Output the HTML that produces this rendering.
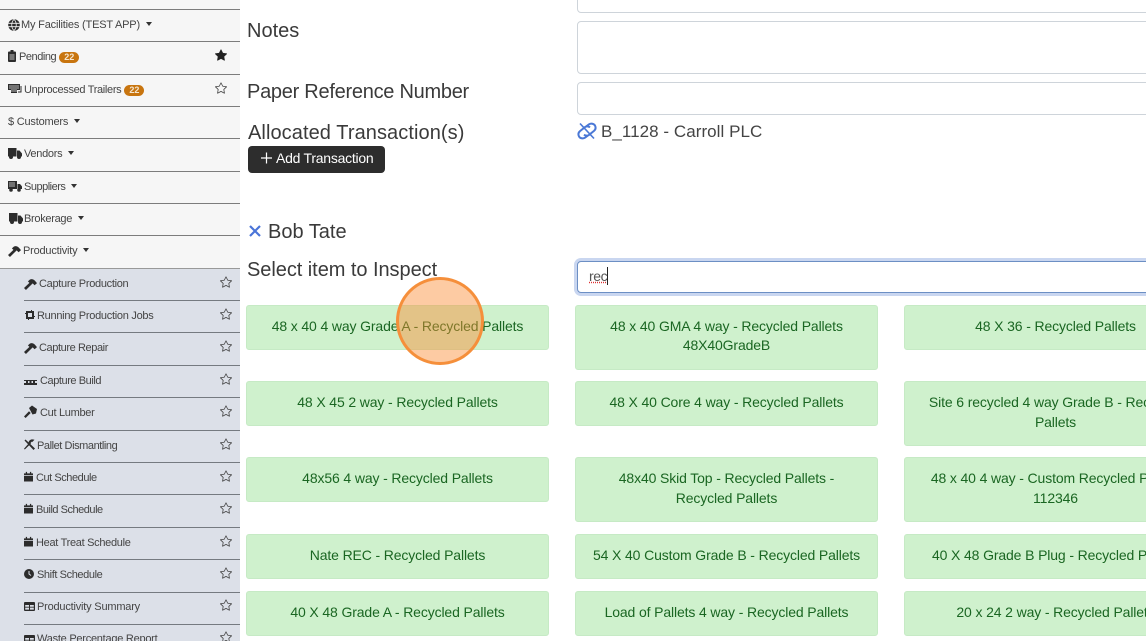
<!DOCTYPE html>
<html lang="en"><head><meta charset="utf-8"><title>Inspection</title>
<style>
html,body{margin:0;padding:0;width:1146px;height:641px;overflow:hidden;background:#fff}
body{position:relative;font-family:"Liberation Sans",sans-serif;color:#333}
#side{position:absolute;left:0;top:0;width:240px;height:641px;background:#f6f6f6;overflow:hidden}
#sub{position:absolute;left:0;top:268px;width:240px;height:373px;background:#dce0e8}
.l{position:absolute;left:0;width:240px;height:1px;background:#7c7c7c}
.s{left:24px;width:216px;background:#757a80}
.t{position:absolute;font-size:11px;line-height:16px;margin-top:1px;white-space:nowrap;color:#444;letter-spacing:-.2px}
.ic{position:absolute;fill:#2c2c2c}
.st{position:absolute;width:12px;height:12px;fill:#444}
.car{display:inline-block;width:0;height:0;border:3px solid transparent;border-top:4px solid #333;border-bottom:0;margin-left:6px;vertical-align:2px}
.b{display:inline-block;background:#c8750f;color:#f5e6cf;font-size:9px;font-weight:bold;line-height:11px;padding:0 5px;border-radius:6px;margin-left:3px;vertical-align:0;letter-spacing:0}
.lab{position:absolute;left:247px;font-size:20px;line-height:24px;white-space:nowrap;color:#3a3a3a;margin-top:1px}
.inp{position:absolute;left:577px;width:640px;border:1px solid #ced4da;border-radius:4px;background:#fff;box-sizing:border-box}
.card{position:absolute;width:303px;box-sizing:border-box;background:#cff1cd;border:1px solid #c6eac5;border-radius:3px;color:#1a6622;font-size:14px;line-height:20px;text-align:center;padding:10px 4px 0;white-space:nowrap;letter-spacing:-.13px}
.card span{display:block;margin-top:-1px}
#btn{position:absolute;left:248px;top:146px;width:137px;height:27px;background:#2d2d2d;border-radius:4px;color:#fff;font-size:14px;line-height:25px;box-sizing:border-box;padding-left:28px;letter-spacing:-.25px}
#dot{position:absolute;left:396px;top:277px;width:88px;height:88px;box-sizing:border-box;border:3.500px solid #f58f3b;border-radius:50%;background:rgba(250,140,50,.45)}
</style></head><body>
<svg width="0" height="0" style="position:absolute"><defs>
<symbol id="so" viewBox="0 0 16 16"><path d="M2.866 14.85c-.078.444.36.791.746.593l4.39-2.256 4.389 2.256c.386.198.824-.149.746-.592l-.83-4.73 3.522-3.356c.33-.314.16-.888-.282-.95l-4.898-.696L8.465.792a.513.513 0 0 0-.927 0L5.354 5.12l-4.898.696c-.441.062-.612.636-.283.95l3.523 3.356-.83 4.73zm4.905-2.767-3.686 1.894.694-3.957a.565.565 0 0 0-.163-.505L1.71 6.745l4.052-.576a.525.525 0 0 0 .393-.288L8 2.223l1.847 3.658a.525.525 0 0 0 .393.288l4.052.575-2.906 2.77a.565.565 0 0 0-.163.506l.694 3.957-3.686-1.894a.503.503 0 0 0-.461 0z"/></symbol>
<symbol id="sf" viewBox="0 0 16 16"><path d="M3.612 15.443c-.386.198-.824-.149-.746-.592l.83-4.73L.173 6.765c-.329-.314-.158-.888.283-.95l4.898-.696L7.538.792c.197-.39.73-.39.927 0l2.184 4.327 4.898.696c.441.062.612.636.282.95l-3.522 3.356.83 4.73c.078.443-.36.79-.746.592L8 13.187l-4.389 2.256z"/></symbol>
<symbol id="ham" viewBox="0 0 12 12"><path d="M0 10.200 5 5.400 3.600 4 5.400 2.400C7 1.600 8.600 2 10 3.400L12 5.600 9.800 7.600 8 5.900 1.800 12z"/></symbol>
<symbol id="truck" viewBox="0 0 14 11"><path d="M0 0h8.500v8.500H0zM9 2.500h2.500L14 5.500v3H9z"/><circle cx="3" cy="9" r="2"/><circle cx="11" cy="9" r="2"/></symbol>
<symbol id="cal" viewBox="0 0 10 11"><path d="M0 2h10v2H0zM0 4.800h10V11H0zM2 .3h1.400V3H2zM6.600.3H8V3H6.600z"/></symbol>
<symbol id="tbl" viewBox="0 0 11 9"><path fill-rule="evenodd" d="M1 0h9a1 1 0 0 1 1 1v7a1 1 0 0 1-1 1H1a1 1 0 0 1-1-1V1a1 1 0 0 1 1-1zm.2 3v1.800H5V3zm4.800 0v1.800h3.800V3zM1.200 5.600v2H5v-2zm4.800 0v2h3.800v-2z"/></symbol>
</defs></svg>

<div id="side">
<div id="sub"></div>
<div class="l" style="top:9px"></div><div class="l" style="top:41px"></div><div class="l" style="top:74px"></div><div class="l" style="top:106px"></div><div class="l" style="top:138px"></div><div class="l" style="top:171px"></div><div class="l" style="top:203px"></div><div class="l" style="top:235px"></div>
<div class="l" style="top:268px;background:#999"></div>
<div class="l s" style="top:300px"></div><div class="l s" style="top:332px"></div><div class="l s" style="top:365px"></div><div class="l s" style="top:397px"></div><div class="l s" style="top:430px"></div><div class="l s" style="top:462px"></div><div class="l s" style="top:494px"></div><div class="l s" style="top:527px"></div><div class="l s" style="top:559px"></div><div class="l s" style="top:592px"></div><div class="l s" style="top:624px"></div>

<svg class="ic" style="left:8px;top:19px" width="12" height="12" viewBox="0 0 12 12"><circle cx="6" cy="6" r="5.800"/><path d="M.4 4.300h11.200M.4 7.700h11.200M6 .4c-3 3-3 8.200 0 11.200M6 .4c3 3 3 8.200 0 11.200" stroke="#f6f6f6" stroke-width=".8" fill="none"/></svg>
<div class="t" style="left:21px;top:16px;letter-spacing:-.18px">My Facilities (TEST APP)<span class="car"></span></div>

<svg class="ic" style="left:8px;top:50px" width="8" height="12" viewBox="0 0 8 12"><path d="M2.500 0h3v1.500H7a1 1 0 0 1 1 1V11a1 1 0 0 1-1 1H1a1 1 0 0 1-1-1V2.500a1 1 0 0 1 1-1h1.500z"/><path d="M1.500 5h5M1.500 7h5M1.500 9h5" stroke="#f6f6f6" stroke-width=".8"/></svg>
<div class="t" style="left:19px;top:48px;letter-spacing:-.45px">Pending<span class="b">22</span></div>
<svg class="st" style="left:215px;top:49px;fill:#222"><use href="#sf"/></svg>

<svg class="ic" style="left:8px;top:84px" width="14" height="10" viewBox="0 0 14 10"><path d="M0 0h12v6H9V9H3V6H0z"/><path d="M2 1v4M4 1v7M6 1v7M8 1v7M10 1v4" stroke="#f6f6f6" stroke-width=".7"/><path d="M12.500 2H13.500V8.500H10V7.500H12.500z"/></svg>
<div class="t" style="left:24px;top:81px;letter-spacing:-.33px">Unprocessed Trailers<span class="b">22</span></div>
<svg class="st" style="left:215px;top:82px"><use href="#so"/></svg>

<div class="t" style="left:8px;top:113px">$ Customers<span class="car"></span></div>

<svg class="ic" style="left:8px;top:148px" width="14" height="11"><use href="#truck"/></svg>
<div class="t" style="left:24px;top:145px;letter-spacing:-.3px">Vendors<span class="car"></span></div>

<svg class="ic" style="left:8px;top:181px" width="14" height="11" viewBox="0 0 14 11"><path d="M0 0h9v8H0z"/><path d="M2 1v5M4 1v5M6 1v5" stroke="#f6f6f6" stroke-width=".7"/><path d="M9.500 3H12l2 2.400V8H9.500z"/><circle cx="3" cy="9" r="1.800"/><circle cx="11" cy="9" r="1.800"/></svg>
<div class="t" style="left:24px;top:178px;letter-spacing:-.5px">Suppliers<span class="car"></span></div>

<svg class="ic" style="left:9px;top:213px" width="14" height="11"><use href="#truck"/></svg>
<div class="t" style="left:24px;top:210px;letter-spacing:-.3px">Brokerage<span class="car"></span></div>

<svg class="ic" style="left:8px;top:244px" width="13" height="13"><use href="#ham"/></svg>
<div class="t" style="left:23px;top:242px">Productivity<span class="car"></span></div>

<svg class="ic" style="left:24px;top:277px" width="13" height="13"><use href="#ham"/></svg>
<div class="t" style="left:39px;top:275px;letter-spacing:-.3px">Capture Production</div>
<svg class="ic" style="left:25px;top:310px" width="10" height="10" viewBox="0 0 10 10"><path fill-rule="evenodd" d="M1 1h8v8H1zM3 3v4h4V3z"/><path d="M0 3h1v1H0zM9 6h1v1H9zM3 9h1v1H3zM6 0h1v1H6z"/></svg>
<div class="t" style="left:37px;top:307px;letter-spacing:-.28px">Running Production Jobs</div>
<svg class="ic" style="left:24px;top:341px" width="13" height="13"><use href="#ham"/></svg>
<div class="t" style="left:39px;top:339px;letter-spacing:-.4px">Capture Repair</div>
<svg class="ic" style="left:24px;top:380px" width="13" height="5" viewBox="0 0 13 5"><path d="M0 0h13v1H0zM0 3h13v2H0zM2 1h2v2H2zM5.500 1h2v2h-2zM9 1h2v2H9z"/></svg>
<div class="t" style="left:40px;top:372px;letter-spacing:-.43px">Capture Build</div>
<svg class="ic" style="left:24px;top:405px" width="13" height="13" viewBox="0 0 13 13"><path d="M0 11.500 5 6.300 6.700 8 1.600 13zM5 3 8 .5l5 3.500-1 4.500-3.500 1z"/></svg>
<div class="t" style="left:40px;top:404px;letter-spacing:-.3px">Cut Lumber</div>
<svg class="ic" style="left:24px;top:439px" width="11" height="11" viewBox="0 0 11 11"><path d="M.5 1.500 1.500.5 11 9.500 9.500 11z"/><path d="M10.500.8 8.300 3 7.800 2.600 6.500 4 7 4.500.8 10.500 0 9.700l5-5.700-.5-.5C5 1 7.500-.5 10.500.8z"/></svg>
<div class="t" style="left:37px;top:437px;letter-spacing:-.43px">Pallet Dismantling</div>
<svg class="ic" style="left:24px;top:471px" width="9" height="11"><use href="#cal"/></svg>
<div class="t" style="left:36px;top:469px;letter-spacing:-.45px">Cut Schedule</div>
<svg class="ic" style="left:24px;top:503px" width="9" height="11"><use href="#cal"/></svg>
<div class="t" style="left:36px;top:501px;letter-spacing:-.48px">Build Schedule</div>
<svg class="ic" style="left:24px;top:536px" width="9" height="11"><use href="#cal"/></svg>
<div class="t" style="left:36px;top:534px;letter-spacing:-.3px">Heat Treat Schedule</div>
<svg class="ic" style="left:24px;top:569px" width="10" height="10" viewBox="0 0 10 10"><circle cx="5" cy="5" r="5"/><path d="M5 2v3l2 1.500" stroke="#dce0e8" fill="none"/></svg>
<div class="t" style="left:37px;top:566px;letter-spacing:-.4px">Shift Schedule</div>
<svg class="ic" style="left:24px;top:602px" width="11" height="9"><use href="#tbl"/></svg>
<div class="t" style="left:37px;top:598px">Productivity Summary</div>
<svg class="ic" style="left:24px;top:635px" width="11" height="9"><use href="#tbl"/></svg>
<div class="t" style="left:37px;top:630px;letter-spacing:-.25px">Waste Percentage Report</div>

<svg class="st" style="left:220px;top:276px"><use href="#so"/></svg>
<svg class="st" style="left:220px;top:308px"><use href="#so"/></svg>
<svg class="st" style="left:220px;top:340px"><use href="#so"/></svg>
<svg class="st" style="left:220px;top:373px"><use href="#so"/></svg>
<svg class="st" style="left:220px;top:405px"><use href="#so"/></svg>
<svg class="st" style="left:220px;top:438px"><use href="#so"/></svg>
<svg class="st" style="left:220px;top:470px"><use href="#so"/></svg>
<svg class="st" style="left:220px;top:502px"><use href="#so"/></svg>
<svg class="st" style="left:220px;top:535px"><use href="#so"/></svg>
<svg class="st" style="left:220px;top:567px"><use href="#so"/></svg>
<svg class="st" style="left:220px;top:599px"><use href="#so"/></svg>
<svg class="st" style="left:220px;top:631px"><use href="#so"/></svg>
</div>

<div class="inp" style="top:-20px;height:33px"></div>
<div class="lab" style="top:18px">Notes</div>
<div class="inp" style="top:21px;height:53px"></div>
<div class="lab" style="top:79px;letter-spacing:-.27px">Paper Reference Number</div>
<div class="inp" style="top:82px;height:33px"></div>
<div class="lab" style="top:120px;left:248px;letter-spacing:.08px">Allocated Transaction(s)</div>

<svg style="position:absolute;left:577px;top:122px" width="20" height="18" viewBox="0 0 20 18" fill="none" stroke="#4a78d6" stroke-width="2"><path d="M9 4.500 12 2.300c2-1.300 5-.7 6 1.300s.5 4-1 5.300l-5 4c-1.500 1-3.500 1-5-.3"/><path d="M11 13.500 8 15.700c-2 1.300-5 .7-6-1.300s-.5-4 1-5.300l5-4c1.500-1 3.500-1 5 .3"/><path d="M3 1.500 17 16.500" stroke-width="1.600"/></svg>
<div style="position:absolute;left:601px;top:121px;font-size:17px;line-height:22px;white-space:nowrap;color:#444;letter-spacing:.05px">B_1128 - Carroll PLC</div>

<div id="btn">Add Transaction</div>
<svg style="position:absolute;left:261px;top:152px" width="11" height="12"><path d="M5.500 .5v11M0 6h11" stroke="#fff" stroke-width="1.200"/></svg>

<svg style="position:absolute;left:249px;top:225px" width="12" height="12"><path d="M1 1l10 10M11 1 1 11" stroke="#4a74d8" stroke-width="2.200"/></svg>
<div class="lab" style="left:268px;top:219px">Bob Tate</div>
<div class="lab" style="top:257px;letter-spacing:-.05px">Select item to Inspect</div>

<div class="inp" style="top:261px;height:32px;border-color:#6c8fc4;box-shadow:0 0 0 3px #c9d6f0"></div>
<div style="position:absolute;left:589px;top:267px;font-size:14px;line-height:18px;color:#555;border-right:1px solid #222;letter-spacing:-.4px;text-decoration:underline dotted #d33">rec</div>

<div class="card" style="left:246px;top:305px;height:45px">48 x 40 4 way Grade A - Recycled Pallets</div>
<div class="card" style="left:575px;top:305px;height:65px">48 x 40 GMA 4 way - Recycled Pallets<span>48X40GradeB</span></div>
<div class="card" style="left:904px;top:305px;height:45px">48 X 36 - Recycled Pallets</div>
<div class="card" style="left:246px;top:381px;height:45px">48 X 45 2 way - Recycled Pallets</div>
<div class="card" style="left:575px;top:381px;height:45px">48 X 40 Core 4 way - Recycled Pallets</div>
<div class="card" style="left:904px;top:381px;height:65px">Site 6 recycled 4 way Grade B - Recycled<br>Pallets</div>
<div class="card" style="left:246px;top:457px;height:45px">48x56 4 way - Recycled Pallets</div>
<div class="card" style="left:575px;top:457px;height:65px">48x40 Skid Top - Recycled Pallets -<br>Recycled Pallets</div>
<div class="card" style="left:904px;top:457px;height:65px">48 x 40 4 way - Custom Recycled Pallets<br>112346</div>
<div class="card" style="left:246px;top:534px;height:45px">Nate REC - Recycled Pallets</div>
<div class="card" style="left:575px;top:534px;height:45px">54 X 40 Custom Grade B - Recycled Pallets</div>
<div class="card" style="left:904px;top:534px;height:45px">40 X 48 Grade B Plug - Recycled Pallets</div>
<div class="card" style="left:246px;top:591px;height:45px">40 X 48 Grade A - Recycled Pallets</div>
<div class="card" style="left:575px;top:591px;height:45px">Load of Pallets 4 way - Recycled Pallets</div>
<div class="card" style="left:904px;top:591px;height:45px">20 x 24 2 way - Recycled Pallets</div>

<div id="dot"></div>
</body></html>
